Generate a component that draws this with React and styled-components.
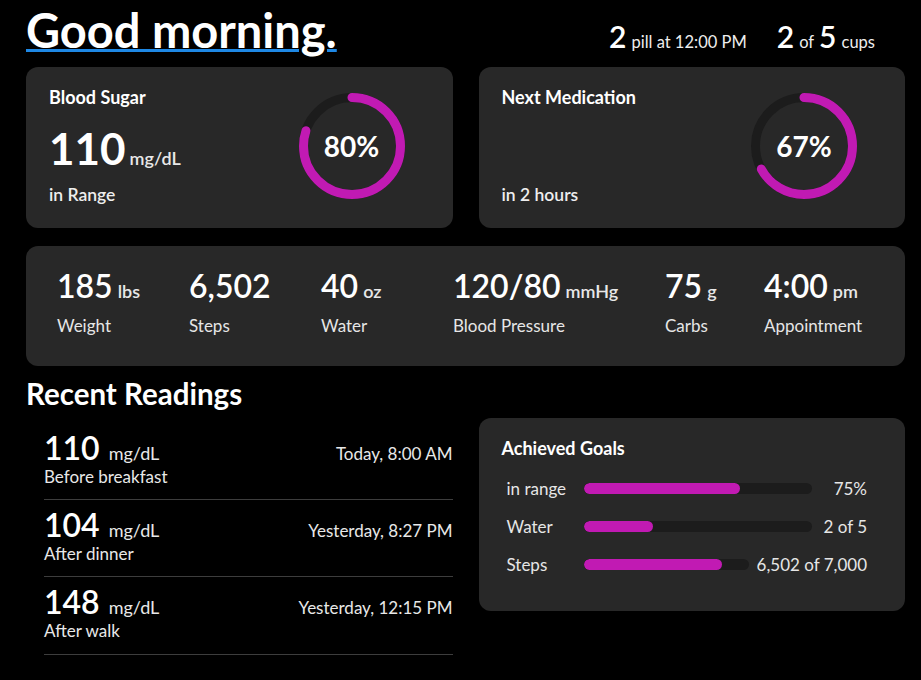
import React from 'react';
import styled, { createGlobalStyle } from 'styled-components';

const GlobalStyle = createGlobalStyle`
  body {
    margin: 0;
    background: #000;
    color: #fff;
    font-family: Lato, "Noto Sans", sans-serif;
  }
`;

const ACCENT = '#c11ab3';
const TRACK = '#1c1c1c';

const Page = styled.div`
  padding: 5px 16px 20px 26px;
`;

const Header = styled.header`
  display: flex;
  justify-content: space-between;
  align-items: baseline;
  padding-right: 30px;
`;

const Title = styled.h1`
  margin: 0;
  font-size: 47px;
  line-height: 1.1;
  font-weight: 700;
  text-decoration: underline;
  text-decoration-color: #1e88e5;
  text-decoration-thickness: 3px;
  text-underline-offset: 1px;
`;

const Reminders = styled.div`
  display: flex;
  align-items: baseline;
  gap: 30px;
`;

const Reminder = styled.div`
  display: flex;
  align-items: baseline;
  gap: 5px;
  font-size: 16.5px;
  color: #eee;
`;

const Big = styled.span`
  font-size: 30px;
  font-weight: 600;
  color: #fff;
`;

const CardRow = styled.div`
  display: grid;
  grid-template-columns: 1fr 1fr;
  gap: 26px;
  margin-top: 10px;
`;

const Card = styled.section`
  background: #282828;
  border-radius: 12px;
`;

const GaugeCard = styled(Card)`
  display: flex;
  align-items: center;
  justify-content: space-between;
  height: 161px;
  box-sizing: border-box;
  padding: 20px 48px 23px 23px;
`;

const GaugeText = styled.div`
  display: flex;
  flex-direction: column;
  align-self: stretch;
`;

const CardTitle = styled.h3`
  margin: 0;
  font-size: 18px;
  line-height: 20px;
  font-weight: 700;
`;

const Reading = styled.div`
  display: flex;
  align-items: baseline;
  gap: 4px;
  margin-top: 19px;
`;

const HugeNumber = styled.span`
  font-size: 44px;
  line-height: 1;
  font-weight: 700;
`;

const Unit = styled.span`
  font-size: ${(p) => p.size || 18}px;
  font-weight: ${(p) => p.weight || 600};
  color: #e8e8e8;
`;

const Caption = styled.div`
  margin-top: auto;
  font-size: 17.5px;
  line-height: 20px;
  font-weight: 600;
  color: #eee;
`;

const RingWrap = styled.div`
  display: grid;
  place-items: center;
  width: 106px;
  height: 106px;
  & > * {
    grid-area: 1 / 1;
  }
`;

const RingLabel = styled.span`
  font-size: 28px;
  font-weight: 700;
`;

const Ring = ({ value }) => {
  const r = 48.5;
  const c = 2 * Math.PI * r;
  return (
    <RingWrap>
      <svg width="106" height="106" viewBox="0 0 106 106">
        <circle cx="53" cy="53" r={r} fill="none" stroke={TRACK} strokeWidth="9" />
        <circle
          cx="53"
          cy="53"
          r={r}
          fill="none"
          stroke={ACCENT}
          strokeWidth="9"
          strokeLinecap="round"
          strokeDasharray={`${(c * value) / 100} ${c}`}
          transform="rotate(-90 53 53)"
        />
      </svg>
      <RingLabel>{value}%</RingLabel>
    </RingWrap>
  );
};

const StatsCard = styled(Card)`
  display: grid;
  grid-template-columns: 132px 132px 132px 212px 99px 1fr;
  margin-top: 18px;
  padding: 24px 20px 30px 31px;
`;

const Stat = styled.div`
  display: flex;
  flex-direction: column;
  gap: 13px;
`;

const StatValue = styled.div`
  display: flex;
  align-items: baseline;
  gap: 5px;
  font-size: 32px;
  line-height: 1;
  font-weight: 600;
`;

const StatLabel = styled.div`
  font-size: 17px;
  line-height: 1.25;
  color: #e6e6e6;
`;

const Bottom = styled.div`
  display: grid;
  grid-template-columns: 1fr 1fr;
  gap: 26px;
`;

const SectionTitle = styled.h2`
  margin: 11px 0 0;
  font-size: 29.5px;
  line-height: 1.15;
  font-weight: 700;
`;

const ReadingList = styled.ul`
  list-style: none;
  margin: 12px 0 0 18px;
  padding: 0;
`;

const ReadingItem = styled.li`
  padding: 9px 0 12px;
  border-bottom: 1px solid #3d3d3d;
`;

const ReadingTop = styled.div`
  display: flex;
  justify-content: space-between;
  align-items: baseline;
`;

const ReadingValue = styled.div`
  display: flex;
  align-items: baseline;
  gap: 9px;
  font-size: 32px;
  line-height: 1;
  font-weight: 600;
`;

const ReadingMeta = styled.div`
  margin-top: 2px;
  font-size: 17px;
  line-height: 1.25;
  color: #e8e8e8;
`;

const ReadingTime = styled.span`
  font-size: 17px;
  color: #e8e8e8;
`;

const GoalsCard = styled(Card)`
  align-self: start;
  margin-top: 52px;
  padding: 20px 38px 27px 23px;
`;

const GoalList = styled.div`
  margin: 12px 0 0 5px;
`;

const GoalRow = styled.div`
  display: flex;
  align-items: center;
  height: 38px;
  font-size: 17px;
  color: #e6e6e6;
`;

const GoalLabel = styled.span`
  width: 77px;
  flex-shrink: 0;
`;

const Bar = styled.div`
  flex: 1;
  height: 11px;
  border-radius: 6px;
  background: ${TRACK};
  overflow: hidden;
`;

const Fill = styled.div`
  height: 100%;
  border-radius: 6px;
  background: ${ACCENT};
`;

const GoalValue = styled.span`
  min-width: 47px;
  margin-left: 8px;
  text-align: right;
  white-space: nowrap;
`;

const stats = [
  { value: '185', unit: 'lbs', label: 'Weight' },
  { value: '6,502', label: 'Steps' },
  { value: '40', unit: 'oz', label: 'Water' },
  { value: '120/80', unit: 'mmHg', label: 'Blood Pressure' },
  { value: '75', unit: 'g', label: 'Carbs' },
  { value: '4:00', unit: 'pm', label: 'Appointment' },
];

const readings = [
  { value: 110, note: 'Before breakfast', time: 'Today, 8:00 AM' },
  { value: 104, note: 'After dinner', time: 'Yesterday, 8:27 PM' },
  { value: 148, note: 'After walk', time: 'Yesterday, 12:15 PM' },
];

const goals = [
  { label: 'in range', fill: 68.6, value: '75%' },
  { label: 'Water', fill: 30.6, value: '2 of 5' },
  { label: 'Steps', fill: 84, value: '6,502 of 7,000' },
];

export default function App() {
  return (
    <Page>
      <GlobalStyle />
      <Header>
        <Title>Good morning.</Title>
        <Reminders>
          <Reminder>
            <Big>2</Big> pill at 12:00 PM
          </Reminder>
          <Reminder>
            <Big>2</Big> of <Big>5</Big> cups
          </Reminder>
        </Reminders>
      </Header>

      <CardRow>
        <GaugeCard>
          <GaugeText>
            <CardTitle>Blood Sugar</CardTitle>
            <Reading>
              <HugeNumber>110</HugeNumber>
              <Unit>mg/dL</Unit>
            </Reading>
            <Caption>in Range</Caption>
          </GaugeText>
          <Ring value={80} />
        </GaugeCard>
        <GaugeCard>
          <GaugeText>
            <CardTitle>Next Medication</CardTitle>
            <Caption>in 2 hours</Caption>
          </GaugeText>
          <Ring value={67} />
        </GaugeCard>
      </CardRow>

      <StatsCard>
        {stats.map((s) => (
          <Stat key={s.label}>
            <StatValue>
              {s.value}
              {s.unit && <Unit>{s.unit}</Unit>}
            </StatValue>
            <StatLabel>{s.label}</StatLabel>
          </Stat>
        ))}
      </StatsCard>

      <Bottom>
        <div>
          <SectionTitle>Recent Readings</SectionTitle>
          <ReadingList>
            {readings.map((r) => (
              <ReadingItem key={r.time}>
                <ReadingTop>
                  <ReadingValue>
                    {r.value}
                    <Unit weight={400}>mg/dL</Unit>
                  </ReadingValue>
                  <ReadingTime>{r.time}</ReadingTime>
                </ReadingTop>
                <ReadingMeta>{r.note}</ReadingMeta>
              </ReadingItem>
            ))}
          </ReadingList>
        </div>
        <GoalsCard>
          <CardTitle>Achieved Goals</CardTitle>
          <GoalList>
            {goals.map((g) => (
              <GoalRow key={g.label}>
                <GoalLabel>{g.label}</GoalLabel>
                <Bar>
                  <Fill style={{ width: `${g.fill}%` }} />
                </Bar>
                <GoalValue>{g.value}</GoalValue>
              </GoalRow>
            ))}
          </GoalList>
        </GoalsCard>
      </Bottom>
    </Page>
  );
}
